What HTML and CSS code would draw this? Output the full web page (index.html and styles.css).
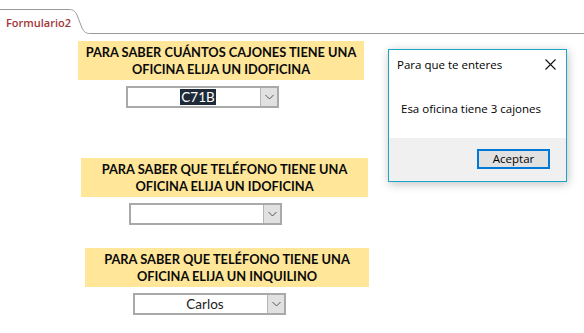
FILE: index.html
```html
<!DOCTYPE html>
<html lang="es">
<head>
<meta charset="utf-8">
<title>Formulario2</title>
<link rel="stylesheet" href="styles.css">
</head>
<body>
<div class="page">
  <div class="tabbar">
    <svg class="tabline" width="584" height="34" viewBox="0 0 584 34">
      <path d="M0 9.5 H69 C73 9.5 75 11 77 15 L82 28 C84 32 86 33.5 90 33.5 H584" fill="none" stroke="#9a9a9a" stroke-width="1"/>
    </svg>
    <span class="tabtext">Formulario2</span>
  </div>
  <div class="form">
    <section class="block block-1">
      <div class="label">PARA SABER CUÁNTOS CAJONES TIENE UNA<br>OFICINA ELIJA UN IDOFICINA</div>
      <div class="combo"><span class="combo-value"><span class="sel">C71B</span></span><span class="combo-btn"><svg width="9" height="6" viewBox="0 0 9 6"><path d="M0.5 1 L4.5 5 L8.5 1" fill="none" stroke="#555" stroke-width="1"/></svg></span></div>
    </section>
    <section class="block block-2">
      <div class="label">PARA SABER QUE TELÉFONO TIENE UNA<br>OFICINA ELIJA UN IDOFICINA</div>
      <div class="combo"><span class="combo-value"></span><span class="combo-btn"><svg width="9" height="6" viewBox="0 0 9 6"><path d="M0.5 1 L4.5 5 L8.5 1" fill="none" stroke="#555" stroke-width="1"/></svg></span></div>
    </section>
    <section class="block block-3">
      <div class="label">PARA SABER QUE TELÉFONO TIENE UNA<br>OFICINA ELIJA UN INQUILINO</div>
      <div class="combo"><span class="combo-value">Carlos</span><span class="combo-btn"><svg width="9" height="6" viewBox="0 0 9 6"><path d="M0.5 1 L4.5 5 L8.5 1" fill="none" stroke="#555" stroke-width="1"/></svg></span></div>
    </section>
  </div>
  <div class="dialog">
    <div class="dialog-title">
      <span>Para que te enteres</span>
      <svg class="close" width="11" height="11" viewBox="0 0 11 11"><path d="M0.5 0.5 L10.5 10.5 M10.5 0.5 L0.5 10.5" stroke="#111" stroke-width="1.1"/></svg>
    </div>
    <div class="dialog-body">Esa oficina tiene 3 cajones</div>
    <div class="dialog-foot"><button class="btn">Aceptar</button></div>
  </div>
</div>
</body>
</html>
```
FILE: styles.css
```css
html, body {
  margin: 0;
  padding: 0;
  background: #ffffff;
}
.page {
  position: relative;
  width: 584px;
  height: 333px;
  overflow: hidden;
  background: #ffffff;
}
.tabbar {
  position: relative;
  height: 34px;
}
.tabline {
  position: absolute;
  left: 0;
  top: 0;
}
.tabtext {
  position: relative;
  display: inline-block;
  padding: 16px 0 0 6px;
  font-family: "Open Sans", "Noto Sans", sans-serif;
  font-weight: 600;
  font-size: 11px;
  line-height: 14px;
  color: #a33437;
}
.form {
  display: flex;
  flex-direction: column;
}
.block {
  display: flex;
  flex-direction: column;
  align-items: flex-start;
  gap: 6px;
}
.block-1 { margin-top: 7px; padding-left: 78px; }
.block-2 { margin-top: 50px; padding-left: 81px; }
.block-3 { margin-top: 23px; padding-left: 85px; }
.label {
  background: #ffe699;
  height: 39px;
  box-sizing: border-box;
  padding-top: 3px;
  text-align: center;
  font-family: "Lato", "Open Sans", sans-serif;
  font-weight: 700;
  font-size: 12.8px;
  line-height: 17px;
  color: #0a0a0a;
}
.block-1 .label { width: 286px; }
.block-2 .label { width: 287px; }
.block-3 .label { width: 284px; }
.combo {
  margin-left: 48px;
  width: 153px;
  height: 22px;
  box-sizing: border-box;
  border: 2px solid #a9a9a9;
  display: flex;
  background: #fff;
}
.combo-value {
  flex: 1;
  display: flex;
  align-items: center;
  justify-content: center;
  font-family: "Lato", "Open Sans", sans-serif;
  font-size: 13.5px;
  color: #222;
  padding-left: 8px;
}
.sel {
  background: #1e2a38;
  color: #fff;
  padding: 0 1px;
  line-height: 16px;
}
.combo-btn {
  width: 16px;
  background: #e1e1e1;
  border-left: 1px solid #b5b5b5;
  display: flex;
  align-items: center;
  justify-content: center;
}
.dialog {
  position: absolute;
  left: 388px;
  top: 49px;
  width: 179px;
  height: 133px;
  box-sizing: border-box;
  border: 1px solid #1aa6c4;
  background: #fff;
  box-shadow: 1px 2px 9px rgba(0,0,0,0.25);
  display: flex;
  flex-direction: column;
  font-family: "Open Sans", "Noto Sans", sans-serif;
  font-size: 11.5px;
  color: #000;
}
.dialog-title {
  height: 29px;
  display: flex;
  align-items: center;
  justify-content: space-between;
  padding: 0 10px 0 8px;
}
.close { display: block; }
.dialog-body {
  flex: 1;
  padding-left: 12px;
  padding-top: 22px;
  box-sizing: border-box;
}
.dialog-foot {
  height: 43px;
  background: #f0f0f0;
  display: flex;
  justify-content: flex-end;
  align-items: flex-start;
  padding: 11px 16px 0 0;
  box-sizing: border-box;
}
.btn {
  width: 73px;
  height: 20px;
  box-sizing: border-box;
  border: 2px solid #0078d7;
  background: #e1e1e1;
  font-family: "Open Sans", "Noto Sans", sans-serif;
  font-size: 11.5px;
  color: #000;
  padding: 0;
  line-height: 14px;
}
```
